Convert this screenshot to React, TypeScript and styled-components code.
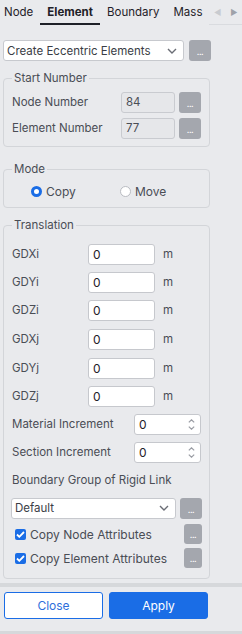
import React from 'react';
import styled, { createGlobalStyle } from 'styled-components';

const GlobalStyle = createGlobalStyle`
  html, body {
    margin: 0;
    padding: 0;
    background: #e9eaed;
  }
  body {
    font-family: Inter, "Noto Sans", sans-serif;
    font-size: 11.5px;
    color: #4a4d55;
  }
  * { box-sizing: border-box; }
`;

const Panel = styled.div`
  width: 242px;
  height: 634px;
  display: flex;
  flex-direction: column;
  background: #e9eaed;
  overflow: hidden;
`;

const TabBar = styled.div`
  display: flex;
  align-items: flex-end;
  height: 25px;
  margin-left: -3px;
`;

const Tab = styled.div<{ $active?: boolean }>`
  height: 25px;
  display: flex;
  align-items: center;
  padding: 0 7px;
  font-size: 11.5px;
  font-weight: ${p => (p.$active ? 700 : 400)};
  color: #1f2128;
  border-bottom: 2px solid ${p => (p.$active ? '#1f2128' : 'transparent')};
  white-space: nowrap;
`;

const TabArrows = styled.div`
  flex: 1;
  height: 25px;
  display: flex;
  align-items: center;
  justify-content: space-around;
  border-bottom: 1px solid #d9dbdf;
  font-size: 8px;
`;

const Arrow = styled.span<{ $dark?: boolean }>`
  color: ${p => (p.$dark ? '#9ea2a9' : '#c8cbd0')};
`;

const Body = styled.div`
  flex: 1;
  display: flex;
  flex-direction: column;
  padding: 15px 0 0 3px;
`;

const Row = styled.div<{ $gap?: number }>`
  display: flex;
  align-items: center;
  gap: ${p => p.$gap ?? 5}px;
`;

const Select = styled.div<{ $width: number }>`
  width: ${p => p.$width}px;
  height: 21px;
  background: #fff;
  border: 1px solid #c7c9ce;
  border-radius: 3px;
  display: flex;
  align-items: center;
  justify-content: space-between;
  padding: 0 6px 0 3px;
  color: #3a3d45;
`;

const DotButton = styled.div<{ $w?: number; $h?: number }>`
  width: ${p => p.$w ?? 22}px;
  height: ${p => p.$h ?? 21}px;
  background: #a4a7ae;
  border-radius: 3px;
  color: #fff;
  font-size: 9px;
  display: flex;
  align-items: flex-end;
  justify-content: center;
  padding-bottom: 5px;
  line-height: 1;
  letter-spacing: -0.5px;
  flex-shrink: 0;
`;

const Group = styled.fieldset<{ $top: number }>`
  width: 207px;
  margin: ${p => p.$top}px 0 0 0;
  padding: 0 0 0 8px;
  border: 1px solid #d3d5d9;
  border-radius: 4px;
  min-width: 0;
`;

const Legend = styled.legend`
  padding: 0 2px;
  color: #4a4d55;
`;

const FieldRow = styled.div<{ $h: number }>`
  height: ${p => p.$h}px;
  display: flex;
  align-items: center;
`;

const Label = styled.div<{ $w: number }>`
  width: ${p => p.$w}px;
  flex-shrink: 0;
  color: #4a4d55;
  white-space: nowrap;
`;

const ReadOnlyInput = styled.div`
  width: 54px;
  height: 21px;
  background: #e6e7ea;
  border: 1px solid #c9cbd0;
  border-radius: 3px;
  padding: 0 4px;
  display: flex;
  align-items: center;
  color: #4a4d55;
  margin-right: 4px;
`;

const TextInput = styled.div`
  width: 67px;
  height: 21px;
  background: #fff;
  border: 1px solid #c6c8cd;
  border-radius: 3px;
  padding: 0 4px;
  display: flex;
  align-items: center;
  color: #1f2128;
  font-size: 12px;
`;

const Unit = styled.span`
  margin-left: 8px;
  color: #4a4d55;
`;

const Spin = styled(TextInput)`
  justify-content: space-between;
  padding-right: 5px;
`;

const SpinArrows = styled.div`
  display: flex;
  flex-direction: column;
  gap: 3px;
`;

const RadioLabel = styled.label<{ $w?: number }>`
  width: ${p => (p.$w ? `${p.$w}px` : 'auto')};
  display: flex;
  align-items: center;
  gap: 4px;
  color: #4a4d55;
  font-size: 12px;
`;

const RadioDot = styled.span<{ $on?: boolean }>`
  width: 11px;
  height: 11px;
  border-radius: 50%;
  background: #fff;
  border: ${p => (p.$on ? '3px solid #1a6de6' : '1px solid #b9bcc2')};
`;

const CheckRow = styled.div`
  height: 24px;
  display: flex;
  align-items: center;
  justify-content: space-between;
  padding-right: 7px;
`;

const CheckLabel = styled.label`
  display: flex;
  align-items: center;
  gap: 4px;
  padding-left: 3px;
  color: #4a4d55;
  font-size: 12px;
`;

const CheckBox = styled.span`
  width: 11px;
  height: 11px;
  border-radius: 2px;
  background: #1a6de6;
  display: flex;
  align-items: center;
  justify-content: center;
`;

const Divider = styled.div`
  height: 4px;
  background: #d6d8db;
  margin: 4px 0 0 -3px;
`;

const Footer = styled.div`
  display: flex;
  gap: 6px;
  padding: 5px 0 0 1px;
  height: 44px;
`;

const Button = styled.button<{ $primary?: boolean }>`
  width: 99px;
  height: 27px;
  border-radius: 3px;
  border: 1px solid #1a6de6;
  background: ${p => (p.$primary ? '#1a6de6' : '#fff')};
  color: ${p => (p.$primary ? '#fff' : '#2f6fdb')};
  font-family: Inter, "Noto Sans", sans-serif;
  font-size: 12px;
  padding: 0;
`;

const BottomBand = styled.div`
  height: 6px;
  background: #d6d8db;
`;

const Chevron = () => (
  <svg width="10" height="6" viewBox="0 0 10 6">
    <path d="M1 1l4 4 4-4" fill="none" stroke="#6a6d75" strokeWidth="1.4" />
  </svg>
);

const SpinIcon = ({ up }: { up?: boolean }) => (
  <svg width="7" height="4" viewBox="0 0 7 4">
    <path d={up ? 'M0.8 3.4L3.5 0.8L6.2 3.4' : 'M0.8 0.6L3.5 3.2L6.2 0.6'} fill="none" stroke="#9a9da4" strokeWidth="1.2" />
  </svg>
);

const Tick = () => (
  <svg width="9" height="7" viewBox="0 0 9 7">
    <path d="M1 3.5l2.3 2.3L8 1" fill="none" stroke="#fff" strokeWidth="1.8" />
  </svg>
);

const coords = [
  { label: 'GDXi', h: 28 },
  { label: 'GDYi', h: 28 },
  { label: 'GDZi', h: 28 },
  { label: 'GDXj', h: 30 },
  { label: 'GDYj', h: 28 },
  { label: 'GDZj', h: 28 },
];

const Spinner = () => (
  <Spin>
    0
    <SpinArrows>
      <SpinIcon up />
      <SpinIcon />
    </SpinArrows>
  </Spin>
);

export default function App() {
  return (
    <Panel>
      <GlobalStyle />
      <TabBar>
        <Tab>Node</Tab>
        <Tab $active>Element</Tab>
        <Tab>Boundary</Tab>
        <Tab>Mass</Tab>
        <TabArrows>
          <Arrow>◀</Arrow>
          <Arrow $dark>▶</Arrow>
        </TabArrows>
      </TabBar>
      <Body>
        <Row>
          <Select $width={181}>
            Create Eccentric Elements
            <Chevron />
          </Select>
          <DotButton>...</DotButton>
        </Row>

        <Group $top={10}>
          <Legend>Start Number</Legend>
          <FieldRow $h={5} />
          <FieldRow $h={24}>
            <Label $w={109}>Node Number</Label>
            <ReadOnlyInput>84</ReadOnlyInput>
            <DotButton>...</DotButton>
          </FieldRow>
          <FieldRow $h={28}>
            <Label $w={109}>Element Number</Label>
            <ReadOnlyInput>77</ReadOnlyInput>
            <DotButton>...</DotButton>
          </FieldRow>
          <FieldRow $h={4} />
        </Group>

        <Group $top={15}>
          <Legend>Mode</Legend>
          <FieldRow $h={31}>
            <Row $gap={0} style={{ paddingLeft: 19 }}>
              <RadioLabel $w={89}>
                <RadioDot $on />
                Copy
              </RadioLabel>
              <RadioLabel>
                <RadioDot />
                Move
              </RadioLabel>
            </Row>
          </FieldRow>
        </Group>

        <Group $top={10}>
          <Legend>Translation</Legend>
          <FieldRow $h={8} />
          {coords.map(c => (
            <FieldRow key={c.label} $h={c.h}>
              <Label $w={76}>{c.label}</Label>
              <TextInput>0</TextInput>
              <Unit>m</Unit>
            </FieldRow>
          ))}
          <FieldRow $h={28}>
            <Label $w={122}>Material Increment</Label>
            <Spinner />
          </FieldRow>
          <FieldRow $h={28}>
            <Label $w={122}>Section Increment</Label>
            <Spinner />
          </FieldRow>
          <FieldRow $h={28}>
            <Label $w={180}>Boundary Group of Rigid Link</Label>
          </FieldRow>
          <FieldRow $h={28}>
            <Row $gap={4} style={{ marginLeft: -1 }}>
              <Select $width={165}>
                Default
                <Chevron />
              </Select>
              <DotButton>...</DotButton>
            </Row>
          </FieldRow>
          <CheckRow>
            <CheckLabel>
              <CheckBox><Tick /></CheckBox>
              Copy Node Attributes
            </CheckLabel>
            <DotButton $w={18} $h={20}>...</DotButton>
          </CheckRow>
          <CheckRow>
            <CheckLabel>
              <CheckBox><Tick /></CheckBox>
              Copy Element Attributes
            </CheckLabel>
            <DotButton $w={18} $h={20}>...</DotButton>
          </CheckRow>
          <FieldRow $h={8} />
        </Group>

        <Divider />
        <Footer>
          <Button>Close</Button>
          <Button $primary>Apply</Button>
        </Footer>
      </Body>
      <BottomBand />
    </Panel>
  );
}
